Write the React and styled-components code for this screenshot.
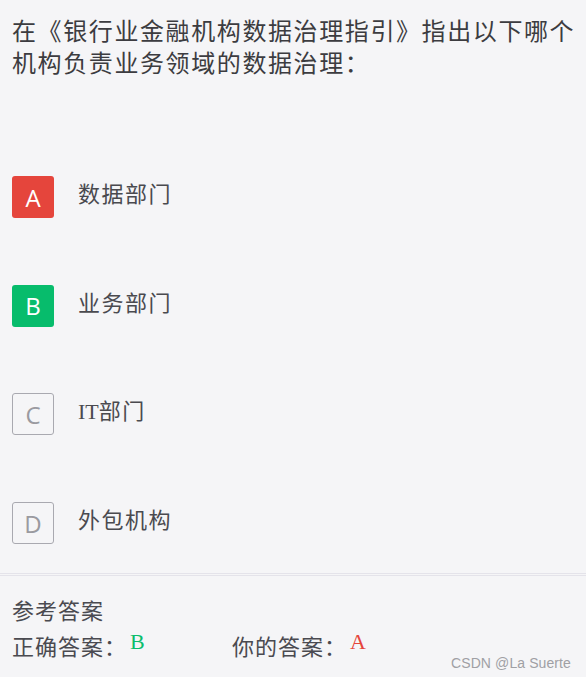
import React from "react";
import styled, { createGlobalStyle } from "styled-components";

const Global = createGlobalStyle`
  html, body { margin: 0; padding: 0; background: #f5f5f7; }
  body { font-family: "Noto Sans CJK SC", "Noto Sans", sans-serif; }
`;

const Page = styled.div`
  position: relative;
  width: 586px;
  height: 677px;
  background: #f5f5f7;
  overflow: hidden;
  box-sizing: border-box;
`;

const Question = styled.div`
  padding: 14px 4px 0 12px;
  font-size: 24px;
  line-height: 32px;
  letter-spacing: 1.6px;
  color: #3c3c40;
`;

const OptionList = styled.div`
  display: flex;
  flex-direction: column;
  gap: 66.7px;
  padding: 98px 0 29px 12px;
`;

const Option = styled.div`
  display: flex;
  align-items: flex-start;
  gap: 24px;
`;

const Badge = styled.div`
  width: 42px;
  height: 42px;
  box-sizing: border-box;
  border-radius: 3px;
  display: flex;
  align-items: center;
  justify-content: center;
  font-family: "Open Sans", "Noto Sans", sans-serif;
  font-size: 24px;
  font-weight: ${(p) => (p.$variant ? 500 : 400)};
  background: ${(p) => (p.$variant === "wrong" ? "#e5453c" : p.$variant === "right" ? "#07bc6c" : "transparent")};
  color: ${(p) => (p.$variant ? "#ffffff" : "#9a9aa0")};
  border: ${(p) => (p.$variant ? "none" : "1px solid #a9a9b0")};
`;

const OptionText = styled.div`
  font-size: 22px;
  line-height: 32px;
  letter-spacing: 1.5px;
  color: #4a4a4f;
`;

const Latin = styled.span`
  font-family: "Liberation Serif", serif;
  letter-spacing: 0;
`;

const Divider = styled.div`
  height: 1px;
  border-top: 1px solid #e4e3ea;
  border-bottom: 1px solid #e4e3ea;
`;

const AnswerSection = styled.div`
  padding: 15px 12px 0 12px;
  font-size: 22px;
  line-height: 36px;
  letter-spacing: 1px;
  color: #4a4a50;
`;

const AnswerRow = styled.div`
  display: flex;
`;

const AnswerItem = styled.div`
  width: 220px;
  display: flex;
  align-items: flex-start;
`;

const Letter = styled.span`
  font-family: "Liberation Serif", serif;
  font-size: 22px;
  line-height: 30px;
  margin-left: 3px;
  color: ${(p) => p.$color};
`;

const Watermark = styled.div`
  position: absolute;
  right: 15px;
  bottom: 6px;
  font-family: "Liberation Sans", Arial, sans-serif;
  font-size: 14px;
  color: #a0a0a4;
  letter-spacing: 0.1px;
`;

const options = [
  { key: "A", text: "数据部门", variant: "wrong" },
  { key: "B", text: "业务部门", variant: "right" },
  { key: "C", text: <><Latin>IT</Latin>部门</> },
  { key: "D", text: "外包机构" },
];

export default function App() {
  return (
    <Page>
      <Global />
      <Question>在《银行业金融机构数据治理指引》指出以下哪个机构负责业务领域的数据治理：</Question>
      <OptionList>
        {options.map((o) => (
          <Option key={o.key}>
            <Badge $variant={o.variant}>{o.key}</Badge>
            <OptionText>{o.text}</OptionText>
          </Option>
        ))}
      </OptionList>
      <Divider />
      <AnswerSection>
        <div>参考答案</div>
        <AnswerRow>
          <AnswerItem>
            正确答案：<Letter $color="#0bbd6c">B</Letter>
          </AnswerItem>
          <AnswerItem>
            你的答案：<Letter $color="#e5453c">A</Letter>
          </AnswerItem>
        </AnswerRow>
      </AnswerSection>
      <Watermark>CSDN @La Suerte</Watermark>
    </Page>
  );
}
